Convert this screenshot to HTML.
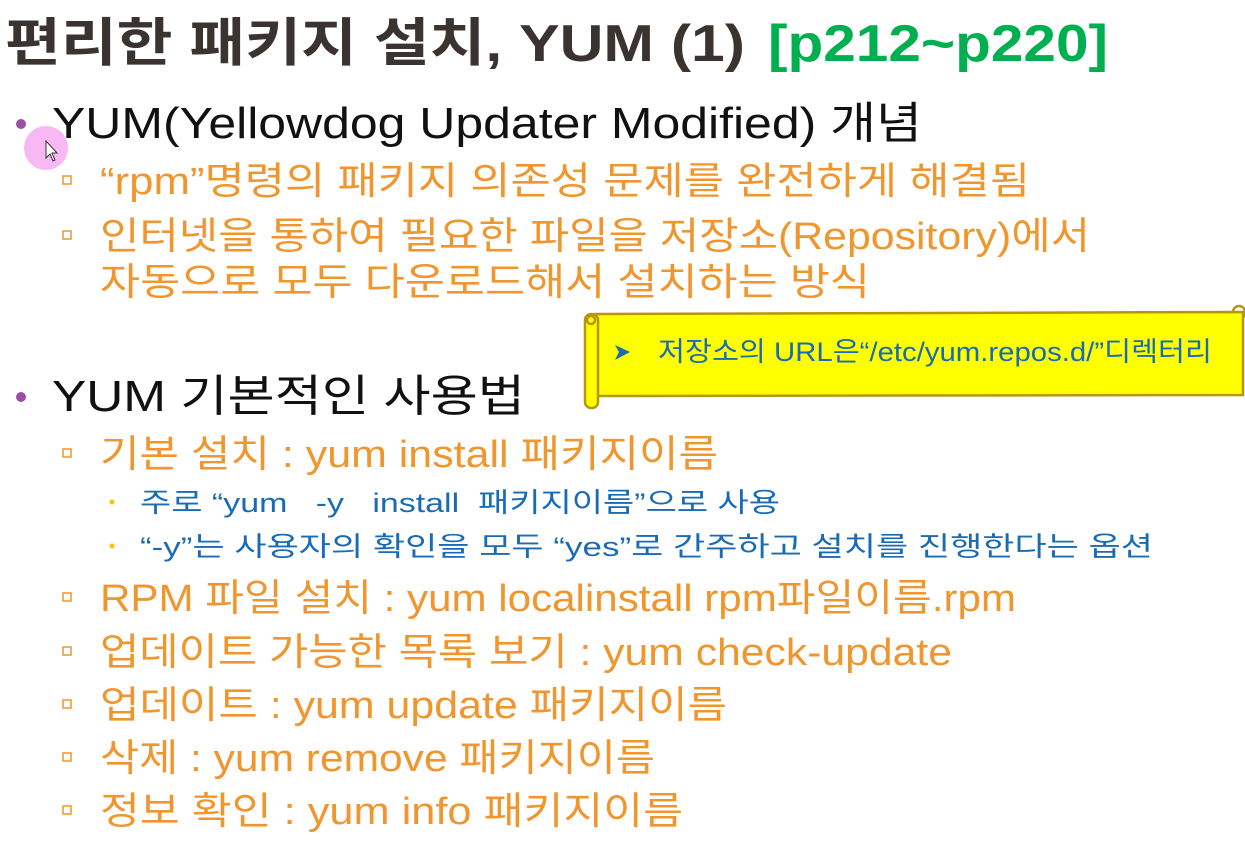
<!DOCTYPE html>
<html><head><meta charset="utf-8"><style>
html,body{margin:0;padding:0;background:#fff;width:1245px;height:845px;overflow:hidden}
svg{display:block}
text{font-family:"Liberation Sans","Noto Sans CJK KR",sans-serif;white-space:pre}
.o{fill:#f0962e;font-size:38px}
.b{fill:#1a6bb5;font-size:27px}
.k{fill:#111;font-size:44px}
</style></head><body>
<svg width="1245" height="845" viewBox="0 0 1245 845">
<text x="5" y="61" font-size="52" font-weight="bold" fill="#3a3330" textLength="740" lengthAdjust="spacingAndGlyphs">편리한 패키지 설치, YUM (1)</text>
<text x="768" y="61" font-size="52" font-weight="bold" fill="#00b050" textLength="340" lengthAdjust="spacingAndGlyphs">[p212~p220]</text>

<circle cx="21" cy="124" r="5" fill="#9b4fa5"/>
<text class="k" x="52" y="138" textLength="870" lengthAdjust="spacingAndGlyphs">YUM(Yellowdog Updater Modified) 개념</text>
<circle cx="46" cy="148" r="22" fill="#f5a0f0" opacity="0.75"/>
<path d="M46 141 L46 158 L50 154 L53 161 L55 160 L52 153 L57 153 Z" fill="#fff" stroke="#333" stroke-width="1"/>

<g fill="none" stroke="#f0962e" stroke-width="1.5">
<rect x="63" y="176" width="8" height="8"/><rect x="63" y="231" width="8" height="8"/>
<rect x="63" y="449" width="8" height="8"/><rect x="63" y="593" width="8" height="8"/>
<rect x="63" y="647" width="8" height="8"/><rect x="63" y="700" width="8" height="8"/>
<rect x="63" y="753" width="8" height="8"/><rect x="63" y="806" width="8" height="8"/>
</g>
<text class="o" x="100" y="194" textLength="930" lengthAdjust="spacingAndGlyphs">“rpm”명령의 패키지 의존성 문제를 완전하게 해결됨</text>
<text class="o" x="100" y="249" textLength="990" lengthAdjust="spacingAndGlyphs">인터넷을 통하여 필요한 파일을 저장소(Repository)에서</text>
<text class="o" x="100" y="295" textLength="770" lengthAdjust="spacingAndGlyphs">자동으로 모두 다운로드해서 설치하는 방식</text>

<circle cx="21" cy="397" r="5" fill="#9b4fa5"/>
<text class="k" x="52" y="411" textLength="473" lengthAdjust="spacingAndGlyphs">YUM 기본적인 사용법</text>

<text class="o" x="100" y="467" textLength="618" lengthAdjust="spacingAndGlyphs">기본 설치 : yum install 패키지이름</text>
<circle cx="112" cy="502" r="2.5" fill="#ffc000"/>
<circle cx="112" cy="546" r="2.5" fill="#ffc000"/>
<text class="b" x="140" y="512" textLength="640" lengthAdjust="spacingAndGlyphs">주로 “yum   -y   install  패키지이름”으로 사용</text>
<text class="b" x="140" y="556" textLength="1013" lengthAdjust="spacingAndGlyphs">“-y”는 사용자의 확인을 모두 “yes”로 간주하고 설치를 진행한다는 옵션</text>
<text class="o" x="100" y="611" textLength="916" lengthAdjust="spacingAndGlyphs">RPM 파일 설치 : yum localinstall rpm파일이름.rpm</text>
<text class="o" x="100" y="665" textLength="852" lengthAdjust="spacingAndGlyphs">업데이트 가능한 목록 보기 : yum check-update</text>
<text class="o" x="100" y="718" textLength="627" lengthAdjust="spacingAndGlyphs">업데이트 : yum update 패키지이름</text>
<text class="o" x="100" y="771" textLength="555" lengthAdjust="spacingAndGlyphs">삭제 : yum remove 패키지이름</text>
<text class="o" x="100" y="824" textLength="583" lengthAdjust="spacingAndGlyphs">정보 확인 : yum info 패키지이름</text>

<g stroke="#b8960a" stroke-width="2.5" fill="#ffff00">
<path d="M596 314 L1243 312 L1243 395 L596 396 Z"/>
<rect x="585" y="314" width="13" height="94" rx="6"/>
<path d="M1233 312 a6 6 0 0 1 12 0 L1245 318" fill="none"/>
<circle cx="591" cy="320" r="4" fill="none"/>
</g>
<path d="M615 345 L630 352 L615 360 L619 352 Z" fill="#1a6bb5"/>
<text x="658" y="361" font-size="27" fill="#1a6bb5" textLength="554" lengthAdjust="spacingAndGlyphs">저장소의 URL은“/etc/yum.repos.d/”디렉터리</text>
</svg>
</body></html>
